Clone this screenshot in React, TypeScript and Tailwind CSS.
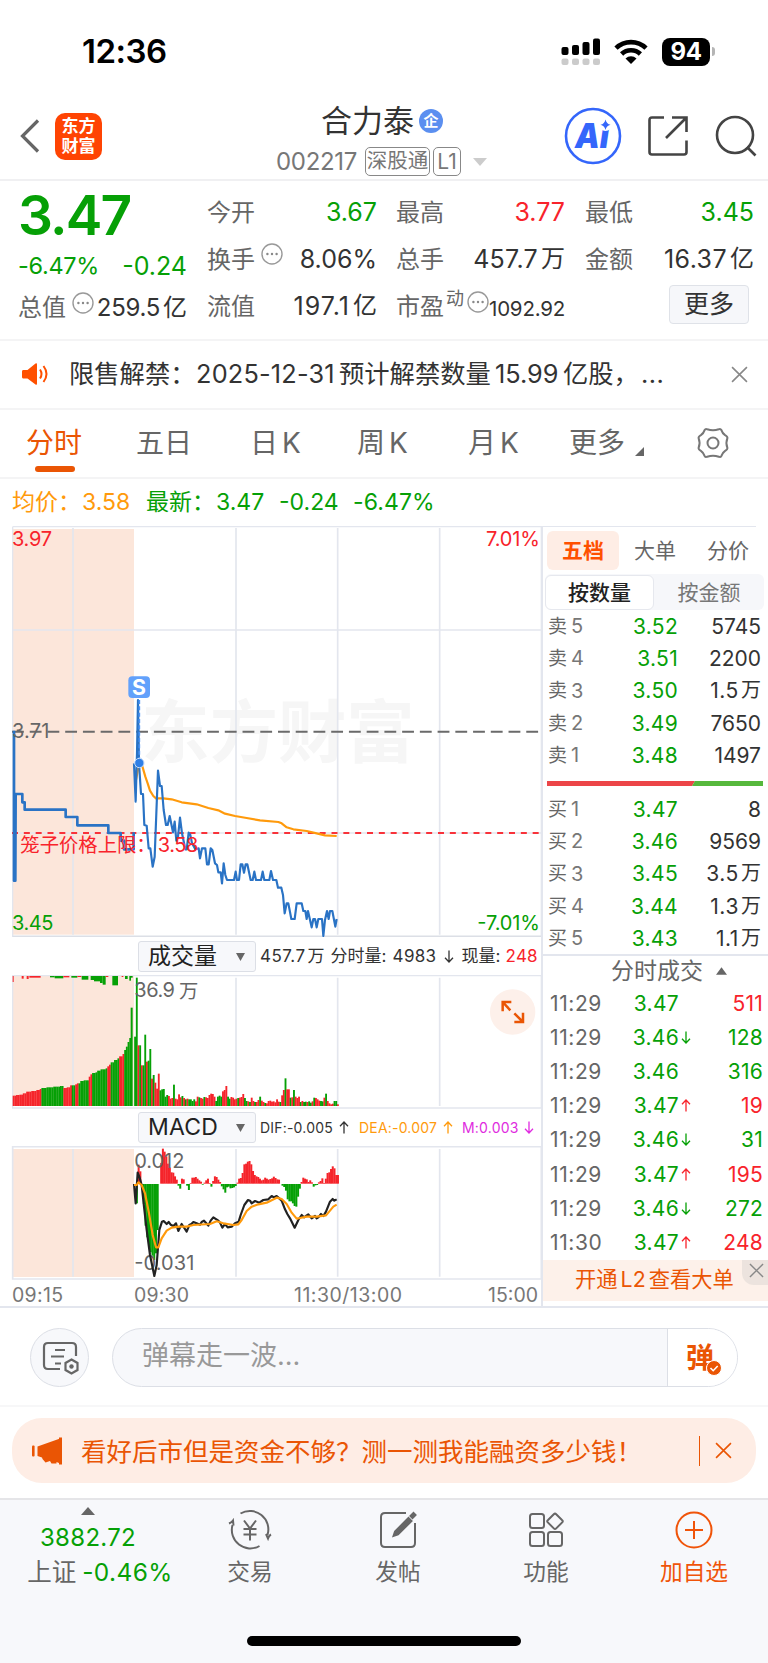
import React from 'react'
import clsx from 'clsx'

const GREEN = 'text-[#06a006]'
const RED = 'text-[#f8232b]'

const sells = [
  ['5', '3.52', '5745'],
  ['4', '3.51', '2200'],
  ['3', '3.50', '1.5', '万'],
  ['2', '3.49', '7650'],
  ['1', '3.48', '1497'],
]

const buys = [
  ['1', '3.47', '8'],
  ['2', '3.46', '9569'],
  ['3', '3.45', '3.5', '万'],
  ['4', '3.44', '1.3', '万'],
  ['5', '3.43', '1.1', '万'],
]

const trades = [
  { time: '11:29', price: '3.47', arrow: '', qty: '511', up: true },
  { time: '11:29', price: '3.46', arrow: 'down', qty: '128', up: false },
  { time: '11:29', price: '3.46', arrow: '', qty: '316', up: false },
  { time: '11:29', price: '3.47', arrow: 'up', qty: '19', up: true },
  { time: '11:29', price: '3.46', arrow: 'down', qty: '31', up: false },
  { time: '11:29', price: '3.47', arrow: 'up', qty: '195', up: true },
  { time: '11:29', price: '3.46', arrow: 'down', qty: '272', up: false },
  { time: '11:30', price: '3.47', arrow: 'up', qty: '248', up: true },
]

// [from x, height] steps of the call auction volume
const auction: [number, number][] = [
  [38, 31], [48, 33], [58, 34], [68, 38], [76, 43], [92, 45], [108, 48], [118, 51], [124, 54], [138, 56], [155, 58],
  [175, 60], [190, 54], [196, 56], [208, 62], [222, 65], [230, 68], [240, 75], [250, 77], [262, 88], [268, 95], [276, 99],
  [284, 101], [290, 106], [300, 110], [312, 113], [318, 119], [324, 124], [332, 131], [340, 138], [350, 143], [356, 149],
  [364, 156], [370, 168], [376, 178], [382, 192], [387, 204],
]
const auctionColors: [number, string][] = [
  [38, 'r'], [122, 'g'], [190, 'r'], [211, 'g'], [224, 'r'], [235, 'g'], [262, 'r'], [272, 'g'], [317, 'r'], [327, 'g'],
  [353, 'r'], [372, 'g'],
]
// [x, width, height, color] of the unmatched bars hanging from the top edge
const unmatched: [number, number, number, string][] = [
  [38, 3, 18, 'r'], [65, 6, 8, 'r'], [80, 6, 9, 'r'], [88, 34, 5, 'r'], [150, 14, 4, 'g'], [164, 26, 7, 'g'],
  [190, 18, 4, 'r'], [214, 18, 5, 'g'], [232, 12, 3, 'r'], [245, 20, 11, 'g'], [272, 10, 12, 'g'], [282, 18, 16, 'g'],
  [300, 8, 21, 'g'], [308, 9, 26, 'g'], [317, 8, 3, 'r'], [337, 17, 28, 'g'], [365, 5, 3, 'r'], [375, 8, 9, 'g'],
  [388, 5, 14, 'g'], [393, 5, 5, 'g'],
]

const volume =
  'g208 g385 r182 g182 r122 g122 g214 r133 g136 g171 r82 g93 r70 r52 r97 g47 g50 g51 g28 g33 r30 r22 r24 g64 r22 r20 r35 r26 g30 r24 g20 r22 g20 g20 g15 g20 r14 r28 g26 r24 r22 g27 r26 r24 r33 r37 r36 r28 g15 g28 g31 g28 r44 r48 r60 g28 g22 r27 r25 r20 r22 g24 r25 r27 r36 g24 g15 r14 g12 r25 r15 g12 r12 r18 g28 r16 r12 g9 r8 r15 r16 r13 r14 r11 r20 r13 g12 r32 r48 g83 r50 r50 g25 r26 g48 r28 r24 r28 g12 r15 g12 g13 r12 g14 g10 r14 g25 r24 r20 r16 g15 g14 r25 g37 r15 r8 r5 r7 g15 g15 r5'.split(
    ' ',
  )

const macd = [
  0, -58, 57, 37, -10, -60, -125, -160, -190, -205, -215, -228, -208, -138, 0, 62, 105, 96, 82, 60, 48, 34, 33, 22, 12, -5,
  -14, 15, 13, 0, -5, -18, 2, 18, 18, 20, 15, 10, 6, -2, 3, 10, 15, 2, -8, 8, 22, 20, 12, 5, -7, -16, -26, -10, -8, -13,
  -12, -10, -6, 3, 15, 17, 32, 58, 60, 66, 68, 58, 38, 26, 22, 20, 15, 10, 12, 18, 15, 12, 14, 16, 21, 17, 13, 12, 0, -5,
  -9, -20, -46, -52, -52, -58, -66, -68, -38, -14, 5, 18, 15, 13, 5, 10, 4, -8, -4, -3, 4, 8, 16, 2, 15, 32, 34, 44, 52, 46,
  26, 26,
]

const pick = <T,>(steps: [number, T][], x: number) => steps.filter(([from]) => from <= x).pop()![1]
const fill = (c: string) => (c === 'g' ? '#06a006' : '#f5242b')

const Dots = ({ className }: { className?: string }) => (
  <svg viewBox="0 0 22 22" className={clsx('w-[22px] h-[22px] shrink-0', className)}>
    <circle cx="11" cy="11" r="10" fill="none" stroke="#999" strokeWidth="1.4" />
    <g fill="#888">
      <circle cx="6.4" cy="11" r="1.2" />
      <circle cx="11" cy="11" r="1.2" />
      <circle cx="15.6" cy="11" r="1.2" />
    </g>
  </svg>
)

const Arrow = ({ up, className }: { up?: boolean; className?: string }) => (
  <svg viewBox="0 0 10 13" className={clsx('inline-block w-[10px] h-[13px]', className)}>
    <path
      d={up ? 'M5 12.5V1M1 5.2 5 1l4 4.2' : 'M5 .5V12M1 7.8 5 12l4-4.2'}
      fill="none"
      stroke="currentColor"
      strokeWidth="1.3"
    />
  </svg>
)

const Cross = ({ className }: { className?: string }) => (
  <svg viewBox="0 0 16 16" className={className}>
    <path d="M1 1l14 14M15 1L1 15" fill="none" stroke="currentColor" strokeWidth="1.5" />
  </svg>
)

const StatusBar = () => (
  <div className="flex items-center justify-between h-[103px] pl-[82px] pr-[53px] text-black">
    <div className="text-[33px] font-semibold tracking-[-0.5px]">12:36</div>
    <div className="flex items-center">
      <svg viewBox="0 0 40 28" className="w-10 h-7">
        <g fill="#000">
          <rect x="0.5" y="9" width="7" height="8" rx="2" />
          <rect x="11" y="7" width="7" height="10" rx="2" />
          <rect x="21.5" y="4" width="7" height="13" rx="2" />
          <rect x="32" y="0.5" width="7" height="16.5" rx="2" />
        </g>
        <g fill="#cbcbcb">
          <rect x="0.5" y="20.5" width="7" height="6.5" rx="2" />
          <rect x="11" y="20.5" width="7" height="6.5" rx="2" />
          <rect x="21.5" y="20.5" width="7" height="6.5" rx="2" />
          <rect x="32" y="20.5" width="7" height="6.5" rx="2" />
        </g>
      </svg>
      <svg viewBox="0 0 34 25" className="w-[34px] h-[25px] ml-[13px]">
        <g fill="none" stroke="#000" strokeWidth="4.6">
          <path d="M2 9.2a21.500 21.500 0 0 1 30 0" />
          <path d="M7.600 15a13.500 13.500 0 0 1 18.800 0" />
        </g>
        <path d="M17 25l-5.500-5.600a8 8 0 0 1 11 0z" fill="#000" />
      </svg>
      <div className="flex items-center justify-center w-[48px] h-[28px] ml-[14px] rounded-[8px] bg-black text-white text-[24px] font-bold tracking-[-0.5px]">
        94
      </div>
      <div className="w-[3px] h-[9px] ml-[2px] rounded-r-full bg-[#b5b5b5]" />
    </div>
  </div>
)

const Header = () => (
  <header className="flex h-[78px] border-b-2 border-[#f0f0f2] text-[#333]">
    <div className="flex items-center w-[277px] pl-[20px] pb-[10px]">
      <svg viewBox="0 0 20 34" className="w-5 h-[34px]">
        <path d="M18 1.500 2.500 17 18 32.500" fill="none" stroke="#666" strokeWidth="3.200" />
      </svg>
      <div className="flex flex-col items-center justify-center w-[47px] h-[47px] ml-[15px] rounded-[10px] bg-[#ff4403] text-white text-[17px] leading-[20px] font-bold">
        <span>东方</span>
        <span>财富</span>
      </div>
    </div>
    <div className="flex flex-col w-[287px]">
      <div className="flex items-center h-[36px] pl-[44px] text-[31px]">
        合力泰
        <span className="flex items-center justify-center w-6 h-6 ml-[5px] rounded-full bg-[#5b8ff0] text-white text-[15px] font-bold">
          企
        </span>
      </div>
      <div className="flex items-center h-[40px] mt-[2px] pt-[4px] text-[24px] text-[#777]">
        <span className="w-[88px] -ml-px mr-px tracking-[-0.3px]">002217</span>
        <span className="flex items-center justify-center w-[65px] h-[29px] border-[1.5px] border-[#888] rounded-[5px] text-[20.5px]">
          深股通
        </span>
        <span className="flex items-center justify-center w-[28px] h-[29px] ml-[3px] border-[1.5px] border-[#888] rounded-[5px] text-[21px]">
          L1
        </span>
        <svg viewBox="0 0 14 8" className="w-[14px] h-2 ml-[12px]">
          <path d="M0 0h14L7 8z" fill="#ccc" />
        </svg>
      </div>
    </div>
    <div className="flex items-center pb-[10px]">
      <svg viewBox="0 0 58 58" className="w-[58px] h-[58px]">
        <circle cx="29" cy="29" r="27" fill="none" stroke="#3466fb" strokeWidth="2.600" />
        <text
          x="11"
          y="41"
          fontSize="34"
          fontWeight="900"
          fontStyle="italic"
          fill="#3466fb"
          textLength="34"
          lengthAdjust="spacingAndGlyphs"
        >
          Ai
        </text>
        <circle cx="41.500" cy="17.500" r="6.500" fill="#fff" />
        <path d="M41.500 12.500q1 4.400 5 5.300-4 .9-5 5.200-1-4.300-5-5.200 4-.9 5-5.300z" fill="#3466fb" />
      </svg>
      <svg viewBox="0 0 40 40" className="w-10 h-10 ml-[26px]">
        <g fill="none" stroke="#444" strokeWidth="2.600">
          <path d="M16 1.500H4Q1.500 1.500 1.500 4v32q0 2.500 2.500 2.500h32q2.500 0 2.500-2.500V24.500" />
          <path d="M24 1.500h14.500V16M38.500 1.500 18 22" />
        </g>
      </svg>
      <svg viewBox="0 0 42 42" className="w-[42px] h-[42px] ml-[27px]">
        <g fill="none" stroke="#444" strokeWidth="2.600">
          <circle cx="20" cy="20" r="18" />
          <path d="M32 32l8.500 8.500" />
        </g>
      </svg>
    </div>
  </header>
)

interface CellProps {
  label: string
  className?: string
  children: React.ReactNode
}

const Cell = ({ label, className, children }: CellProps) => (
  <div className="flex items-center justify-between h-[47px]">
    <span className="text-[24px] text-[#666]">{label}</span>
    <span className={clsx('flex text-[25px]', className)}>{children}</span>
  </div>
)

const Unit = ({ children }: { children: string }) => <span className="ml-[3px] text-[24px] tracking-normal">{children}</span>

const Quote = () => (
  <section className="flex h-[160px] pl-[18px] pt-[8px] pr-[12px] border-b-2 border-[#f4f4f5] text-[#333]">
    <div className="w-[169px]">
      <div className={clsx('h-[54px] text-[55px] leading-[53px] font-semibold tracking-[-1.8px]', GREEN)}>3.47</div>
      <div className={clsx('flex items-center justify-between h-[46px]', GREEN)}>
        <span className="text-[23.5px] tracking-[-0.3px]">-6.47%</span>
        <span className="text-[25px]">-0.24</span>
      </div>
      <div className="flex items-center h-[38px]">
        <span className="text-[24px] text-[#666]">总值</span>
        <Dots className="ml-[6px] mb-[10px]" />
        <span className="flex ml-auto text-[24px] tracking-[-0.3px]">
          259.5<Unit>亿</Unit>
        </span>
      </div>
    </div>
    <div className="w-[170px] ml-[20px]">
      <Cell label="今开" className={GREEN}>3.67</Cell>
      <div className="flex items-center h-[47px]">
        <span className="text-[24px] text-[#666]">换手</span>
        <Dots className="ml-[6px] mb-[12px]" />
        <span className="ml-auto text-[25px]">8.06%</span>
      </div>
      <Cell label="流值" className="tracking-[1px]">
        197.1<Unit>亿</Unit>
      </Cell>
    </div>
    <div className="w-[169px] ml-[19px]">
      <Cell label="最高" className={RED}>3.77</Cell>
      <Cell label="总手" className="tracking-[0.3px]">
        457.7<Unit>万</Unit>
      </Cell>
      <div className="flex items-center h-[47px]">
        <span className="text-[24px] text-[#666]">市盈</span>
        <span className="ml-[2px] mb-[16px] text-[18px] text-[#666]">动</span>
        <Dots className="ml-[3px] mb-[10px]" />
        <span className="ml-auto mt-[6px] text-[20.5px] tracking-[-0.2px]">1092.92</span>
      </div>
    </div>
    <div className="w-[169px] ml-[20px]">
      <Cell label="最低" className={GREEN}>3.45</Cell>
      <Cell label="金额" className="tracking-[0.4px]">
        16.37<Unit>亿</Unit>
      </Cell>
      <button
        type="button"
        className="flex items-center justify-center w-[80px] h-[39px] mt-[2px] ml-auto mr-[5px] border border-[#dfe2e8] rounded-[4px] bg-[#f6f7fa] text-[25px]"
      >
        更多
      </button>
    </div>
  </section>
)

const Notice = () => (
  <section className="flex items-center h-[69px] pb-px pl-[22px] pr-[20px] border-b-2 border-[#f4f4f5] text-[25.3px] text-[#333]">
    <svg viewBox="0 0 26 22" className="w-[26px] h-[22px]">
      <path d="M1 7h4.500L13.500.5q1.500-1 1.500 1v19q0 2-1.500 1L5.500 15.500H1Q0 15 0 14V8.500Q0 7 1 7z" fill="#ff5000" />
      <g fill="none" stroke="#ff5000" strokeWidth="2">
        <path d="M18 6.500q3 4.500 0 9" />
        <path d="M21.500 3q6 8 0 16" />
      </g>
    </svg>
    <p className="flex ml-[21px]">
      <span className="w-[127px]">限售解禁：</span>
      <span className="w-[143px] tracking-[0.2px]">2025-12-31</span>
      <span className="w-[156px]">预计解禁数量</span>
      <span className="w-[68px]">15.99</span>
      <span className="w-[78px]">亿股，</span>
      <span className="tracking-[0.5px]">...</span>
    </p>
    <Cross className="w-[17px] h-[17px] ml-auto text-[#888]" />
  </section>
)

const Tabs = () => (
  <nav className="flex items-center h-[69px] pb-px pl-[26px] border-b-2 border-[#f4f4f5] text-[28px] text-[#666]">
    <div className="relative w-[110px] text-[#ea5504]">
      分时
      <span className="absolute left-[9px] top-[37px] w-10 h-[6px] rounded-full bg-[#ea5504]" />
    </div>
    <div className="w-[114px]">五日</div>
    <div className="flex gap-[4px] w-[107px]">日<span>K</span></div>
    <div className="flex gap-[4px] w-[111px]">周<span>K</span></div>
    <div className="flex gap-[4px] w-[101px]">月<span>K</span></div>
    <div className="flex items-end">
      更多
      <svg viewBox="0 0 9 9" className="w-[9px] h-[9px] mb-[1px] ml-[10px]">
        <path d="M9 0v9H0z" fill="#666" />
      </svg>
    </div>
    <svg viewBox="0 0 32 32" className="w-8 h-8 ml-[53px]">
      <g fill="none" stroke="#777" strokeWidth="2" strokeLinejoin="round">
        <path d="M10.200 2.300Q8.500 1.600 7.600 3.100 6.500 6.500 3.900 8.200 1.300 9.600 1.600 11.200q2 4.800 0 9.600-.3 1.600 2.300 3 2.600 1.700 3.700 5.100.9 1.500 2.600.8 5.800-2 11.600 0 1.700.7 2.600-.8 1.100-3.400 3.700-5.100 2.600-1.400 2.300-3-2-4.800 0-9.600.3-1.600-2.300-3-2.600-1.700-3.700-5.100-.9-1.500-2.600-.8-5.800 2-11.600 0z" />
        <circle cx="16" cy="16" r="5.500" />
      </g>
    </svg>
  </nav>
)

const PriceChart = () => (
  <svg viewBox="0 18 1626 1233" className="block w-[542px] h-[411px] text-[60px]">
    <rect x="38" y="27" width="364" height="1217" fill="#fce6da" />
    <g fill="#f6f6f6" fontWeight="700">
      <text x="424" y="712" fontSize="205" textLength="820">东方财富</text>
    </g>
    <g stroke="#e3e6ee" fill="none">
      <path d="M38 20H1626M38 20V1251H1624V20" strokeWidth="4" />
      <path d="M219 24V1244M708 24V1244M1013 24V1244M1319 24V1244M38 330H1624M38 939H1624" strokeWidth="5" />
    </g>
    <path d="M38 1249H1624" stroke="#dcdfe6" strokeWidth="5" />
    <path d="M36 635H1622" stroke="#6a6a6a" strokeWidth="6" strokeDasharray="35.5 17.7" />
    <path d="M36 939H1624" stroke="#f8323a" strokeWidth="6" strokeDasharray="18 17.5" />
    <g fill="none" strokeWidth="6.5" strokeLinejoin="round">
      <polyline
        stroke="#ff9a0c"
        points="408,780 414,748 422,725 428,742 436,770 443,790 450,812 460,828 468,835 490,835 515,838 545,847 590,853 625,864 655,871 675,881 705,888 740,894 780,901 835,906 845,910 860,922 880,928 920,933 950,940 975,946 1010,948"
      />
      <polyline
        stroke="#2a73c5"
        strokeWidth="8"
        points="42,632 42,1082 46,1082 47,822 67,822 67,847 74,847 74,869 197,869 197,891 232,891 232,916 325,916 325,939 362,939 362,962 372,962 372,988 401,988 401,937"
      />
      <polyline
        stroke="#2a73c5"
        points="402,730 407,845 411,700 414,540 417,730 423,822 429,822 433,915 440,917 446,985 451,985 458,1040 464,1010 469,880 474,752 480,798 485,798 491,870 498,915 503,915 509,888 519,937 524,905 529,962 534,950 540,893 546,940 556,988 560,988 566,938 571,945 576,970 586,988 596,985 600,1015 606,985 616,985 621,1033 626,1033 632,985 637,990 645,1030 651,1035 655,1057 662,1057 666,1090 671,1030 676,1065 681,1080 702,1080 707,1055 711,1080 717,1080 722,1033 727,1033 732,1058 737,1033 742,1033 752,1080 758,1080 763,1055 768,1080 783,1080 788,1055 793,1080 808,1080 813,1053 819,1080 829,1080 834,1103 844,1103 849,1125 854,1180 860,1150 865,1150 874,1197 884,1197 890,1150 905,1150 910,1173 916,1173 920,1197 924,1173 935,1222 940,1197 945,1197 950,1222 955,1197 966,1197 970,1248 975,1200 981,1173 986,1197 990,1173 997,1173 1006,1220 1010,1197"
      />
    </g>
    <path d="M418 540V720" stroke="#4a93f5" strokeWidth="5" strokeDasharray="12 7" />
    <circle cx="418" cy="729" r="14" fill="#2f7fe6" stroke="#c9defb" strokeWidth="3" />
    <rect x="385" y="469" width="65" height="65" rx="12" fill="#62a1fb" />
    <text x="417" y="525" fontSize="64" fontWeight="700" fill="#fff" textAnchor="middle">S</text>
    <text x="36" y="77" fill="#f8232b" textLength="120">3.97</text>
    <text x="36" y="655" fill="#666" textLength="112">3.71</text>
    <text x="36" y="1229" fill="#06a006" textLength="124">3.45</text>
    <text x="1620" y="77" fill="#f8232b" textAnchor="end" textLength="162">7.01%</text>
    <text x="1620" y="1229" fill="#06a006" textAnchor="end" textLength="188">-7.01%</text>
    <text x="61" y="997" fill="#f8232b" fontSize="58">笼子价格上限：</text>
    <text x="473" y="996" fill="#f8232b" textLength="122">3.58</text>
  </svg>
)

const VolumeChart = () => {
  const auctionBars = Array.from({ length: 70 }, (_, i) => 38 + i * 5.07)
  return (
    <svg viewBox="0 135 1626 402" className="block w-[542px] h-[134px]">
      <rect x="38" y="137" width="364" height="391" fill="#fce6da" />
      <g stroke="#e3e6ee" fill="none">
        <path d="M38 137H1624V534H38z" strokeWidth="4" />
        <path d="M219 143V528M708 143V528M1013 143V528M1319 143V528" strokeWidth="5" />
      </g>
      {auctionBars.map((x) => (
        <rect key={x} x={x} y={528 - pick(auction, x)} width="5.6" height={pick(auction, x)} fill={fill(pick(auctionColors, x))} />
      ))}
      <rect x="392" y="233" width="6" height="295" fill="#06a006" />
      {unmatched.map(([x, w, h, c]) => (
        <rect key={x} x={x} y="138" width={w} height={h} fill={fill(c)} />
      ))}
      {volume.map((v, i) => {
        const h = Number(v.slice(1))
        return <rect key={i} x={402.5 + i * 5.07} y={528 - h} width="5.6" height={h} fill={fill(v[0])} />
      })}
      <text x="403" y="202" fontSize="60" fill="#666" textLength="122">36.9</text>
      <text x="537" y="203" fontSize="58" fill="#666">万</text>
      <circle cx="1538" cy="246" r="68" fill="#fdf0ea" />
      <path
        d="M1508 244V216H1534M1508 216L1531 241M1569 248V276H1543M1569 276L1543 250"
        fill="none"
        stroke="#ea5504"
        strokeWidth="7.5"
      />
    </svg>
  )
}

const MacdChart = () => (
  <svg viewBox="0 648 1626 402" className="block w-[542px] h-[134px]">
    <rect x="38" y="657" width="364" height="384" fill="#fce6da" />
    <g stroke="#e3e6ee" fill="none">
      <path d="M38 650H1624V1047H38z" strokeWidth="5" />
      <path d="M219 657V1040M708 657V1040M1013 657V1040M1319 657V1040" strokeWidth="5" />
    </g>
    {macd.map((v, i) => (
      <rect
        key={i}
        x={402.5 + i * 5.2}
        y={v > 0 ? 761 - v : 762}
        width="6"
        height={Math.abs(v)}
        fill={v > 0 ? '#f5242b' : '#06a006'}
      />
    ))}
    <g fill="#666" fontSize="60">
      <text x="403" y="713" textLength="150">0.012</text>
      <text x="403" y="1021" textLength="180">-0.031</text>
    </g>
    <g fill="none" strokeWidth="6.5" strokeLinejoin="round">
      <polyline
        stroke="#222"
        points="402,762 407,820 413,728 418,740 425,765 432,830 440,900 450,975 463,1038 470,1005 478,900 486,875 491,873 500,882 506,876 512,884 520,888 528,880 535,903 545,882 560,905 568,885 574,882 580,876 590,880 600,884 605,876 612,872 619,880 625,887 632,872 640,862 655,872 660,878 667,893 675,882 683,892 695,890 705,880 716,875 722,855 733,825 744,810 750,812 755,820 765,813 778,818 790,810 805,808 815,798 822,802 830,798 845,812 855,838 862,852 870,865 884,893 895,870 905,855 912,862 918,858 925,853 935,865 945,858 950,865 955,862 963,852 970,858 978,845 990,815 998,807 1003,812 1010,808"
      />
      <polyline
        stroke="#ff9a0c"
        points="402,765 410,765 415,757 425,765 435,790 447,850 458,915 468,952 475,952 485,925 500,902 515,893 535,890 560,890 580,885 630,882 650,874 670,880 700,885 715,883 725,870 740,843 755,830 775,823 800,818 830,803 845,807 860,822 875,848 890,866 900,864 920,860 950,860 978,856 990,842 1000,830 1010,824"
      />
    </g>
  </svg>
)

const IndicatorSelect = ({ label }: { label: string }) => (
  <button
    type="button"
    className="flex items-center justify-between w-[118px] h-[31px] ml-[138px] mr-[4px] pl-[9px] pr-[10px] border border-[#dcdfe6] rounded-[3px] bg-[#f7f8fb] text-[23px] text-[#222]"
  >
    {label}
    <svg viewBox="0 0 9 8" className="w-[9px] h-2">
      <path d="M0 0h9L4.500 8z" fill="#666" />
    </svg>
  </button>
)

const Charts = () => (
  <div className="w-[542px]">
    <PriceChart />
    <div className="flex items-center h-[38px] pt-px text-[17px] text-[#333]">
      <IndicatorSelect label="成交量" />
      <span className="tracking-[0.5px]">457.7</span>
      <span className="w-[23px] ml-[2px] text-[17px]">万</span>
      <span className="w-[62px] text-[17px]">分时量:</span>
      <span className="w-[51px] tracking-[0.3px]">4983</span>
      <Arrow />
      <span className="w-[44px] ml-[8px] text-[17px]">现量:</span>
      <span className={clsx('tracking-[0.2px]', RED)}>248</span>
    </div>
    <VolumeChart />
    <div className="flex items-center h-[37px] text-[14px] tracking-[0.2px]">
      <IndicatorSelect label="MACD" />
      <span className="w-[79px] text-[#333]">DIF:-0.005</span>
      <Arrow up className="text-[#333]" />
      <span className="w-[84px] ml-[10px] text-[#ff9a0c]">DEA:-0.007</span>
      <Arrow up className="text-[#ff9a0c]" />
      <span className="w-[62px] ml-[9px] text-[#e02be0]">M:0.003</span>
      <Arrow className="text-[#e02be0]" />
    </div>
    <MacdChart />
    <div className="flex items-center h-[28px] pt-[3px] pl-[12px] text-[19.5px] text-[#777]">
      <span className="w-[122px] tracking-[0.3px]">09:15</span>
      <span className="w-[160px] tracking-[0.2px]">09:30</span>
      <span className="w-[194px] tracking-[0.5px]">11:30/13:00</span>
      <span>15:00</span>
    </div>
  </div>
)

const Level = ({ side, row }: { side: string; row: string[] }) => (
  <div className="flex items-center h-[32.3px] pl-[5px] pr-[7px] text-[21px]">
    <span className="w-[23px] text-[19px] text-[#666]">{side}</span>
    <span className="w-[14px] text-[20px] text-[#777]">{row[0]}</span>
    <span className={clsx('w-[93px] text-right tracking-[0.3px]', GREEN)}>{row[1]}</span>
    <span className="flex ml-auto text-[#333]">
      <span className={clsx(row[3] && 'tracking-[0.6px]')}>{row[2]}</span>
      {row[3] && <span className="ml-[2px] text-[20px]">{row[3]}</span>}
    </span>
  </div>
)

const OrderBook = () => (
  <div className="flex flex-col w-[227px] border-l-2 border-[#e3e6ee] -ml-px">
    <div className="flex items-center h-[47px] pl-[4px] text-[21px] text-[#666] border-t border-[#e3e6ee] mr-[12px]">
      <span className="flex shrink-0 items-center justify-center w-[72px] h-[39px] rounded-[6px] bg-[#feede5] text-[#ff5000] font-bold">
        五档
      </span>
      <span className="shrink-0 w-[73px] ml-[15px]">大单</span>
      <span className="shrink-0">分价</span>
    </div>
    <div className="flex items-center w-[219px] h-[36px] mt-px ml-[2px] rounded-[6px] bg-[#f6f7fa] text-[21px] text-[#777]">
      <span className="flex items-center justify-center w-[109px] h-[35px] border border-[#e6e8ee] rounded-[6px] bg-white text-[#222] font-medium">
        按数量
      </span>
      <span className="flex items-center justify-center w-[110px]">按金额</span>
    </div>
    <div className="h-[162px]">
      {sells.map((row) => (
        <Level key={row[0]} side="卖" row={row} />
      ))}
    </div>
    <svg viewBox="0 0 216 5" className="w-[216px] h-[5px] mt-[9px] mb-[7px] ml-[4px]">
      <path d="M0 0h148l-3 5H0z" fill="#ec4548" />
      <path d="M148 0h68v5h-71z" fill="#56b83c" />
    </svg>
    <div className="h-[163px] border-b-2 border-[#e3e6ee]">
      {buys.map((row) => (
        <Level key={row[0]} side="买" row={row} />
      ))}
    </div>
    <div className="flex items-center h-[30px] pl-[68px] text-[23px] text-[#666]">
      分时成交
      <svg viewBox="0 0 10 7" className="w-[11px] h-[8px] ml-[13px]">
        <path d="M0 7h10L5 0z" fill="#666" />
      </svg>
    </div>
    {trades.map((t, i) => (
      <div key={i} className="flex items-center h-[34.2px] pl-[7px] pr-[5px] text-[21px]">
        <span className="w-[60px] tracking-[0.6px] text-[#666]">{t.time}</span>
        <span className={clsx('w-[69px] text-right tracking-[0.3px]', GREEN)}>{t.price}</span>
        {t.arrow && <Arrow up={t.arrow === 'up'} className={clsx('ml-[2px]', t.arrow === 'up' ? RED : GREEN)} />}
        <span className={clsx('ml-auto tracking-[0.2px]', t.up ? RED : GREEN)}>{t.qty}</span>
      </div>
    ))}
    <div className="relative flex items-center h-[41px] pl-[32px] bg-[#fdf1ea] text-[21.3px] text-[#ea5504]">
      开通<span className="mx-[3px]">L2</span>查看大单
      <span className="absolute right-0 top-0 flex items-center justify-center w-[26px] h-[25px] rounded-bl-[12px] bg-[#ece3de]">
        <Cross className="w-[15px] h-[15px] -mt-[3px] ml-[3px] text-[#888]" />
      </span>
    </div>
  </div>
)

const Danmu = () => (
  <section className="flex items-center h-[99px] pt-[2px] pl-[30px] border-b-2 border-[#f7f7f8]">
    <div className="flex items-center justify-center w-[59px] h-[59px] border border-[#dcdfe6] rounded-full bg-[#f7f8fb]">
      <svg viewBox="0 0 38 34" className="w-[38px] h-[34px] mt-[1px] ml-[2px]">
        <g fill="none" stroke="#666" strokeWidth="2.200">
          <path d="M18 28H6q-4 0-4-4V6q0-4 4-4h24q4 0 4 4v9" />
          <path d="M13 9h10M9 15.500h13M13 22.500h6" />
          <path d="M29.500 18.500l6 3.500v7l-6 3.500-6-3.500v-7z" />
        </g>
        <circle cx="29.5" cy="25.5" r="2.2" fill="#666" />
      </svg>
    </div>
    <div className="flex w-[626px] h-[59px] ml-[23px] border border-[#dcdfe6] rounded-full bg-[#f7f8fb] overflow-hidden">
      <div className="flex items-center w-[554px] pl-[29px] pb-[4px] text-[27px] text-[#999]">弹幕走一波...</div>
      <div className="flex items-center flex-1 pl-[18px] border-l border-[#dcdfe6] bg-white text-[28px] font-bold text-[#ea5504]">
        弹
        <svg viewBox="0 0 16 16" className="w-4 h-4 mt-[21px] -ml-[8px]">
          <circle cx="8" cy="8" r="7.5" fill="#ea5504" stroke="#fff" />
          <path d="M4.500 8l2.700 2.700 4.500-4.700" fill="none" stroke="#fff" strokeWidth="1.600" />
        </svg>
      </div>
    </div>
  </section>
)

const Banner = () => (
  <section className="h-[93px] pt-[11px] px-[12px] border-b-2 border-[#e5e5e8]">
    <div className="flex items-center h-[65px] pl-[20px] pr-[24px] rounded-[30px] bg-[#feede5] text-[25.5px] text-[#ea5504]">
      <svg viewBox="0 0 31 28" className="w-[31px] h-7">
        <g fill="#ea5504">
          <rect x="0" y="8.5" width="2.6" height="11" rx="1" />
          <path d="M5.500 9.500 29.500 1v26l-5-2v1.500l-5 0-1.500-2.500-4.500 1.500-3-3.500-.5-1.500-4.500-1.500z" />
          <rect x="27" y="0.5" width="3" height="27" />
        </g>
      </svg>
      <span className="mt-[2px] ml-[18px]">看好后市但是资金不够？测一测我能融资多少钱！</span>
      <span className="w-[1.5px] h-[30px] ml-auto mr-[15px] bg-[#ea5504]" />
      <Cross className="w-[17px] h-[17px]" />
    </div>
  </section>
)

const NavItem = ({ label, className, children }: { label: string; className?: string; children: React.ReactNode }) => (
  <div className={clsx('flex flex-col items-center w-[148px] pt-[8px]', className)}>
    <svg viewBox="0 0 44 44" className="w-11 h-11" fill="none" stroke="currentColor" strokeWidth="2">
      {children}
    </svg>
    <span className="h-[40px] leading-[40px] text-[22.7px]">{label}</span>
  </div>
)

const BottomNav = () => (
  <footer className="h-[163px] bg-[#f7f8fb] text-[#666]">
    <div className="flex h-[136px]">
      <div className="flex flex-col items-center w-[176px] pt-[7px]">
        <svg viewBox="0 0 14 8" className="w-[14px] h-2">
          <path d="M0 8h14L7 0z" fill="#666" />
        </svg>
        <span className={clsx('h-[45px] leading-[46px] text-[24px] tracking-[0.3px]', GREEN)}>3882.72</span>
        <span className="flex items-center h-[24px] pl-[24px] whitespace-nowrap text-[24.5px]">
          上证<span className={clsx('ml-[6px] tracking-[0.4px]', GREEN)}>-0.46%</span>
        </span>
      </div>
      <NavItem label="交易">
        <path d="M12.500 5.500A18.500 18.500 0 0 1 39.500 27M31.500 38A18.500 18.500 0 0 1 4.500 17" />
        <path d="M43 26.500q-2 1-3 4l-2-4.500M1 15.500q2.500-1 4-3l.5 5" />
        <path d="M16 12.500l6 8 6-8M22 20.500v12M15.500 21h13M15.500 26.500h13" />
      </NavItem>
      <NavItem label="发帖">
        <path d="M30 5H9Q5 5 5 9v26q0 4 4 4h26q4 0 4-4V15" />
        <path d="M17.500 28l1.500-4.500L32.500 10l3 3L22 26.500z" fill="currentColor" />
        <path d="M34.500 8l3-3 2 2-3 3z" fill="currentColor" />
      </NavItem>
      <NavItem label="功能">
        <rect x="6" y="6" width="14" height="14" rx="2.5" />
        <rect x="6" y="24" width="14" height="14" rx="2.5" />
        <rect x="24" y="24" width="14" height="14" rx="2.5" />
        <path d="M29.800 6.200q1.200-1.200 2.400 0l6 6q1.200 1 0 2.200l-6 6q-1.200 1.200-2.400 0l-6-6q-1.200-1.200 0-2.200z" />
      </NavItem>
      <NavItem label="加自选" className="text-[#f05409]">
        <circle cx="22" cy="22" r="17.5" />
        <path d="M22 13v18M13 22h18" />
      </NavItem>
    </div>
    <div className="w-[274px] h-[10px] mx-auto rounded-full bg-black" />
  </footer>
)

const App = () => {
  return (
    <div className="w-[768px] h-[1663px] overflow-hidden bg-white font-['Inter','Noto_Sans_CJK_SC',sans-serif] whitespace-nowrap leading-none">
      <StatusBar />
      <Header />
      <Quote />
      <Notice />
      <Tabs />
      <div className="flex items-center h-[47px] pl-[12px] text-[23px] text-[#ff9a0c]">
        <span className="w-[70px]">均价：</span>
        <span className="w-[64px]">3.58</span>
        <span className={clsx('flex', GREEN)}>
          <span className="w-[70px]">最新：</span>
          <span className="w-[63px]">3.47</span>
          <span className="w-[74px]">-0.24</span>
          <span className="tracking-[0.1px]">-6.47%</span>
        </span>
      </div>
      <div className="flex h-[782px] border-b-2 border-[#e3e6ee]">
        <Charts />
        <OrderBook />
      </div>
      <Danmu />
      <Banner />
      <BottomNav />
    </div>
  )
}

export default App
